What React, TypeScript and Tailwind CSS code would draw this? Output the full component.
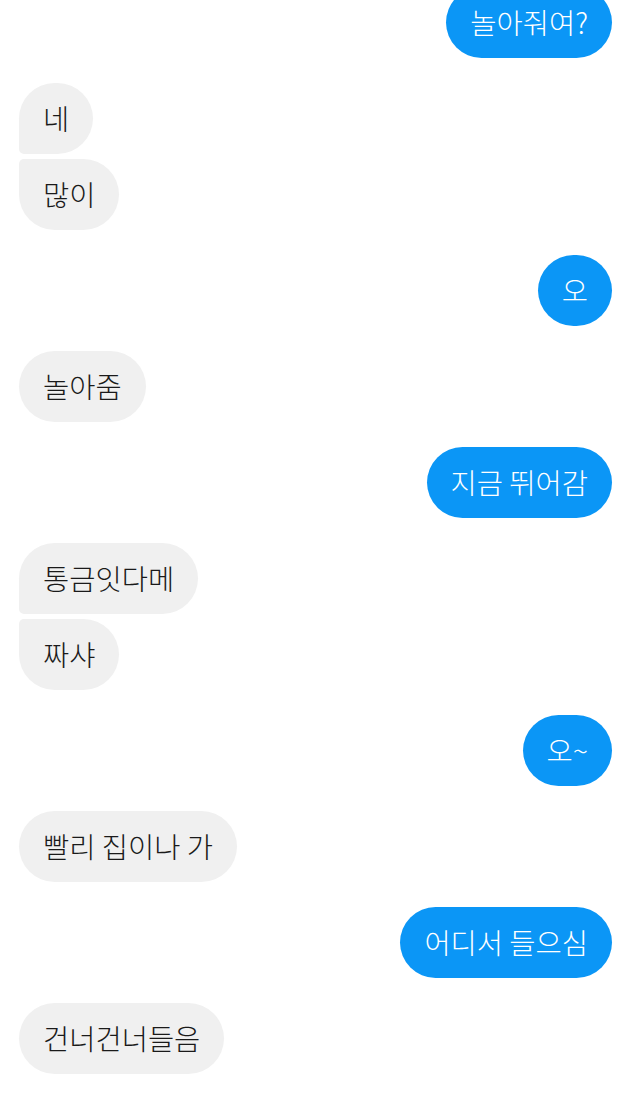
type Msg = { text: string; me: boolean; corner?: 'bl' | 'tl' };

const rows: Msg[][] = [
  [{ text: '놀아줘여?', me: true }],
  [
    { text: '네', me: false, corner: 'bl' },
    { text: '많이', me: false, corner: 'tl' },
  ],
  [{ text: '오', me: true }],
  [{ text: '놀아줌', me: false }],
  [{ text: '지금 뛰어감', me: true }],
  [
    { text: '통금잇다메', me: false, corner: 'bl' },
    { text: '짜샤', me: false, corner: 'tl' },
  ],
  [{ text: '오~', me: true }],
  [{ text: '빨리 집이나 가', me: false }],
  [{ text: '어디서 들으심', me: true }],
  [{ text: '건너건너들음', me: false }],
];

function Bubble({ msg }: { msg: Msg }) {
  const base =
    'h-[71px] flex items-center px-[24px] text-[28.5px] font-light leading-none rounded-[36px] whitespace-nowrap';
  const color = msg.me ? 'bg-[#0b96f6] text-white' : 'bg-[#f0f0f0] text-[#1a1a1a]';
  const corner =
    msg.corner === 'bl' ? 'rounded-bl-[5px]' : msg.corner === 'tl' ? 'rounded-tl-[5px]' : '';
  return <div className={`${base} ${color} ${corner}`}>{msg.text}</div>;
}

export default function App() {
  return (
    <div
      className="w-[629px] h-[1100px] overflow-hidden bg-white"
      style={{ fontFamily: '"Noto Sans CJK KR", "Noto Sans", sans-serif' }}
    >
      <div className="flex flex-col gap-[25px] pl-[19px] pr-[17px] -mt-[13px]">
        {rows.map((group, i) => (
          <div key={i} className={`flex flex-col gap-[5px] ${group[0].me ? 'items-end' : 'items-start'}`}>
            {group.map((m, j) => (
              <Bubble key={j} msg={m} />
            ))}
          </div>
        ))}
      </div>
    </div>
  );
}
